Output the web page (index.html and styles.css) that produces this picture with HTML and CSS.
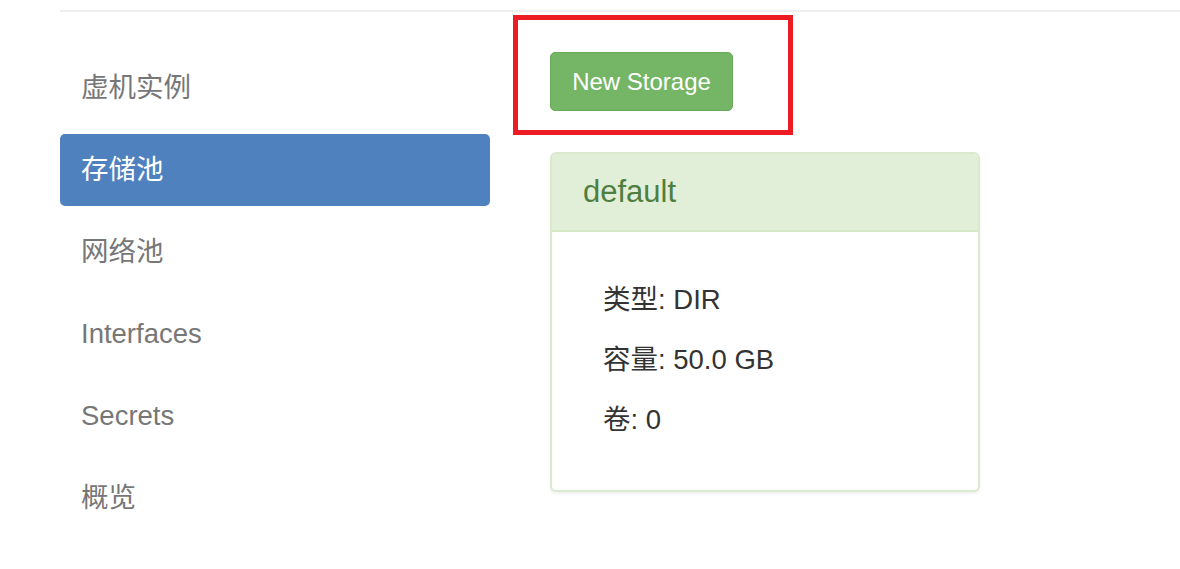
FILE: index.html
```html
<!DOCTYPE html>
<html lang="zh-CN">
<head>
    <meta charset="UTF-8">
    <meta name="viewport" content="width=device-width, initial-scale=1.0">
    <title>存储池</title>
    <link rel="stylesheet" href="styles.css">
</head>
<body>
<div class="page">
    <div class="topline"></div>
    <div class="main">
        <ul class="side-nav">
            <li><a href="#">虚机实例</a></li>
            <li class="active"><a href="#">存储池</a></li>
            <li><a href="#">网络池</a></li>
            <li><a href="#">Interfaces</a></li>
            <li><a href="#">Secrets</a></li>
            <li><a href="#">概览</a></li>
        </ul>
        <div class="content">
            <div class="btn-wrap">
                <a class="btn-success" href="#">New Storage</a>
                <div class="mark"></div>
            </div>
            <div class="panel">
                <div class="panel-heading">default</div>
                <div class="panel-body">
                    <div class="row">类型: DIR</div>
                    <div class="row">容量: 50.0 GB</div>
                    <div class="row">卷: 0</div>
                </div>
            </div>
        </div>
    </div>
</div>
</body>
</html>
```

FILE: styles.css
```css
body {
    margin: 0;
    padding: 0;
    background-color: #fff;
    color: #333;
    font-family: "Liberation Sans", Arial, "Noto Sans CJK SC", sans-serif;
}
.page {
    padding-left: 60px;
}
.topline {
    height: 2px;
    background-color: #eee;
    margin-top: 10px;
}
.main {
    display: flex;
    margin-top: 40px;
}
.side-nav {
    list-style: none;
    margin: 0;
    padding: 0;
    width: 430px;
}
.side-nav li {
    margin-bottom: 10px;
}
.side-nav a {
    display: block;
    height: 72px;
    line-height: 72px;
    padding: 0 21px;
    font-size: 27.5px;
    color: #777;
    text-decoration: none;
    border-radius: 5px;
}
.side-nav li.active a {
    background-color: #5081bf;
    color: #fff;
}
.content {
    margin-left: 60px;
}
.btn-wrap {
    position: relative;
    width: 183px;
}
.btn-success {
    display: block;
    box-sizing: border-box;
    width: 183px;
    height: 59px;
    line-height: 57px;
    text-align: center;
    font-size: 24px;
    color: #fff;
    text-decoration: none;
    background-color: #74b566;
    border: 1px solid #68aa5a;
    border-radius: 5px;
}
.mark {
    position: absolute;
    left: -37px;
    top: -37px;
    width: 280px;
    height: 120px;
    box-sizing: border-box;
    border: 5px solid #ed1c24;
}
.panel {
    box-sizing: border-box;
    width: 430px;
    margin-top: 41px;
    border: 2px solid #dbe9cf;
    border-radius: 6px;
    box-shadow: 0 2px 3px rgba(0, 0, 0, 0.06);
    background-color: #fff;
}
.panel-heading {
    height: 76px;
    line-height: 76px;
    padding-left: 31px;
    font-size: 31px;
    color: #4f7f40;
    background-color: #e1efd9;
    border-bottom: 2px solid #d6e9c6;
    border-radius: 4px 4px 0 0;
}
.panel-body {
    padding: 38px 0 40px 51px;
}
.row {
    height: 60px;
    line-height: 60px;
    font-size: 27.5px;
    color: #333;
}
```
